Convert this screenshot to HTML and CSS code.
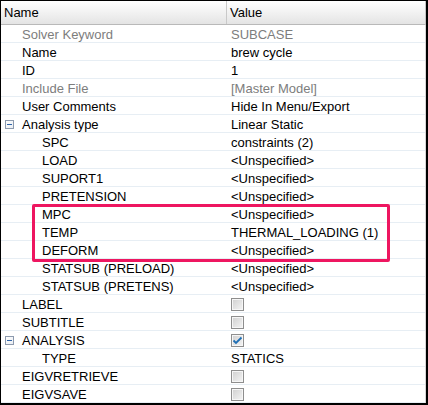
FILE: index.html
```html
<!DOCTYPE html>
<html>
<head>
<meta charset="utf-8">
<link rel="stylesheet" href="styles.css">
</head>
<body>
<div class="frame">
  <div class="header">
    <div class="hcell hname">Name</div>
    <div class="hcell hvalue">Value</div>
  </div>
  <div class="rows">
    <div class="row dim"><div class="name l1">Solver Keyword</div><div class="value">SUBCASE</div></div>
    <div class="row"><div class="name l1">Name</div><div class="value">brew cycle</div></div>
    <div class="row"><div class="name l1">ID</div><div class="value">1</div></div>
    <div class="row dim"><div class="name l1">Include File</div><div class="value">[Master Model]</div></div>
    <div class="row"><div class="name l1">User Comments</div><div class="value">Hide In Menu/Export</div></div>
    <div class="row"><div class="name tg"><span class="toggle"></span>Analysis type</div><div class="value">Linear Static</div></div>
    <div class="row"><div class="name l2">SPC</div><div class="value">constraints (2)</div></div>
    <div class="row"><div class="name l2">LOAD</div><div class="value">&lt;Unspecified&gt;</div></div>
    <div class="row"><div class="name l2">SUPORT1</div><div class="value">&lt;Unspecified&gt;</div></div>
    <div class="row"><div class="name l2">PRETENSION</div><div class="value">&lt;Unspecified&gt;</div></div>
    <div class="row"><div class="name l2">MPC</div><div class="value">&lt;Unspecified&gt;</div></div>
    <div class="row"><div class="name l2">TEMP</div><div class="value">THERMAL_LOADING (1)</div></div>
    <div class="row"><div class="name l2">DEFORM</div><div class="value">&lt;Unspecified&gt;</div></div>
    <div class="row"><div class="name l2">STATSUB (PRELOAD)</div><div class="value">&lt;Unspecified&gt;</div></div>
    <div class="row"><div class="name l2">STATSUB (PRETENS)</div><div class="value">&lt;Unspecified&gt;</div></div>
    <div class="row"><div class="name l1">LABEL</div><div class="value"><span class="cb"></span></div></div>
    <div class="row"><div class="name l1">SUBTITLE</div><div class="value"><span class="cb"></span></div></div>
    <div class="row"><div class="name tg"><span class="toggle"></span>ANALYSIS</div><div class="value"><span class="cb"><svg width="11" height="11" viewBox="0 0 11 11"><path d="M1.5 5.5 L4 8 L9.5 2.5" fill="none" stroke="#1f6fb5" stroke-width="1.8"/></svg></span></div></div>
    <div class="row"><div class="name l2">TYPE</div><div class="value">STATICS</div></div>
    <div class="row"><div class="name l1">EIGVRETRIEVE</div><div class="value"><span class="cb"></span></div></div>
    <div class="row"><div class="name l1">EIGVSAVE</div><div class="value"><span class="cb"></span></div></div>
  </div>
  <div class="highlight"></div>
</div>
</body>
</html>
```

FILE: styles.css
```css
html, body {
  margin: 0;
  padding: 0;
  background: #ffffff;
}
body {
  font-family: "Liberation Sans", Arial, sans-serif;
  font-size: 13px;
  color: #000;
}
.frame {
  position: relative;
  width: 428px;
  height: 405px;
  box-sizing: border-box;
  border-left: 1px solid #000;
  border-top: 1px solid #000;
  border-right: 2px solid #000;
  border-bottom: 2px solid #000;
  background: #fff;
  overflow: hidden;
}
.header {
  display: grid;
  grid-template-columns: 226px 1fr;
  height: 24px;
  box-sizing: border-box;
  background: linear-gradient(to bottom, #ffffff 0%, #f3f3f3 45%, #e4e4e4 100%);
  border-bottom: 1px solid #b9b9b9;
  border-right: 1px solid #c4c4c4;
}
.hcell {
  line-height: 23px;
  white-space: nowrap;
}
.hname {
  padding-left: 3px;
  border-right: 1px solid #c9c9c9;
}
.hvalue {
  padding-left: 3px;
}
.rows {
  border-right: 1px solid #d6d6d6;
}
.row {
  display: grid;
  grid-template-columns: 226px 1fr;
  height: 18px;
  box-sizing: border-box;
  border-bottom: 1px solid #e7eef4;
  line-height: 17px;
  white-space: nowrap;
}
.name {
  display: flex;
  align-items: center;
  padding-top: 1px;
}
.l1 { padding-left: 21px; }
.l2 { padding-left: 41px; }
.tg { padding-left: 4px; }
.value {
  padding-left: 4px;
  padding-top: 1px;
  display: flex;
  align-items: center;
}
.dim .name, .dim .value {
  color: #7d7d7d;
}
.toggle {
  position: relative;
  display: inline-block;
  width: 9px;
  height: 9px;
  box-sizing: border-box;
  border: 1px solid #8c9aae;
  background: linear-gradient(135deg, #ffffff, #e9edf2);
  margin-right: 8px;
}
.toggle::after {
  content: "";
  position: absolute;
  left: 1px;
  top: 3px;
  width: 5px;
  height: 1px;
  background: #2f64a8;
}
.cb {
  display: inline-flex;
  align-items: center;
  justify-content: center;
  width: 13px;
  height: 13px;
  box-sizing: border-box;
  border: 1px solid #8e8e8e;
  background: linear-gradient(135deg, #cfcfcf 0%, #e2e2e2 50%, #f4f4f4 100%);
  box-shadow: inset 0 0 0 1px #f6f6f6;
}
.highlight {
  position: absolute;
  left: 31px;
  top: 203px;
  width: 358px;
  height: 58px;
  box-sizing: border-box;
  border: 3px solid #ee1660;
  border-radius: 2px;
}
```
